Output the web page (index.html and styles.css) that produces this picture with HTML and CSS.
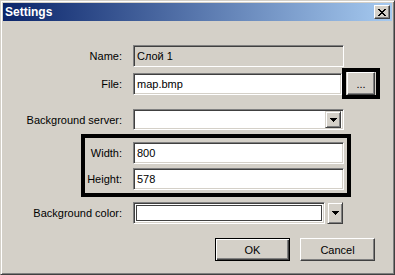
FILE: index.html
```html
<!doctype html>
<html lang="en">
<head>
    <meta charset="UTF-8">
    <title>Settings</title>
    <link rel="stylesheet" href="styles.css">
</head>
<body>
<div class="window">
    <div class="titlebar">
        <span class="title">Settings</span>
        <div class="close">
            <svg width="8" height="7" viewBox="0 0 8 7" shape-rendering="crispEdges"><path d="M0 0h2v1H0zM6 0h2v1H6zM1 1h2v1H1zM5 1h2v1H5zM2 2h4v1H2zM3 3h2v1H3zM2 4h4v1H2zM1 5h2v1H1zM5 5h2v1H5zM0 6h2v1H0zM6 6h2v1H6z" fill="#000"/></svg>
        </div>
    </div>
    <div class="content">
        <div class="row row-name">
            <label class="label">Name:</label>
            <div class="field field-disabled">Слой 1</div>
        </div>
        <div class="row row-file">
            <label class="label">File:</label>
            <div class="field field-file">map.bmp</div>
            <div class="mark mark-browse">
                <div class="btn btn-browse">...</div>
            </div>
        </div>
        <div class="row row-server">
            <label class="label">Background server:</label>
            <div class="field combo">
                <div class="drop drop-inner">
                    <svg width="7" height="4" viewBox="0 0 7 4" shape-rendering="crispEdges"><path d="M0 0h7v1H0zM1 1h5v1H1zM2 2h3v1H2zM3 3h1v1H3z" fill="#000"/></svg>
                </div>
            </div>
        </div>
        <div class="mark mark-size">
            <div class="row">
                <label class="label label-short">Width:</label>
                <div class="field">800</div>
            </div>
            <div class="row row-height">
                <label class="label label-short">Height:</label>
                <div class="field">578</div>
            </div>
        </div>
        <div class="row row-color">
            <label class="label">Background color:</label>
            <div class="swatch-frame"><div class="swatch"></div></div>
            <div class="drop drop-color">
                <svg width="7" height="4" viewBox="0 0 7 4" shape-rendering="crispEdges"><path d="M0 0h7v1H0zM1 1h5v1H1zM2 2h3v1H2zM3 3h1v1H3z" fill="#000"/></svg>
            </div>
        </div>
        <div class="buttons">
            <div class="btn btn-default">OK</div>
            <div class="btn">Cancel</div>
        </div>
    </div>
</div>
</body>
</html>
```

FILE: styles.css
```css
* {
    box-sizing: border-box;
}
body {
    margin: 0;
    font-family: "Liberation Sans", Arial, sans-serif;
    font-size: 11px;
    color: #000;
    background: #d4d0c8;
}
.window {
    width: 395px;
    height: 275px;
    padding: 2px;
    background: #d4d0c8;
    border: 1px solid;
    border-color: #d4d0c8 #404040 #404040 #d4d0c8;
    box-shadow: inset 1px 1px 0 #fff, inset -1px -1px 0 #808080;
}
.titlebar {
    height: 18px;
    display: flex;
    align-items: center;
    justify-content: space-between;
    padding: 0 2px;
    background: linear-gradient(to right, #0a246a, #a6caf0);
}
.title {
    color: #fff;
    font-weight: bold;
    font-size: 12px;
}
.close {
    width: 16px;
    height: 14px;
    display: flex;
    align-items: center;
    justify-content: center;
    background: #d4d0c8;
    border: 1px solid;
    border-color: #fff #404040 #404040 #fff;
    box-shadow: inset -1px -1px 0 #808080;
}
.close svg {
    display: block;
}

/* rows */
.row {
    display: flex;
    align-items: center;
}
.label {
    width: 119px;
    margin-right: 11px;
    text-align: right;
    flex: none;
}
.label-short {
    width: 37px;
}
.field {
    width: 211px;
    height: 22px;
    display: flex;
    align-items: center;
    background: #fff;
    border: 1px solid;
    border-color: #808080 #fff #fff #808080;
    box-shadow: inset 1px 1px 0 #404040, inset -1px -1px 0 #d4d0c8;
    padding-left: 3px;
}
.field-disabled {
    background: #d4d0c8;
}
.row-name {
    margin-top: 24px;
}
.row-file {
    margin-top: 1px;
}
.field-file {
    width: 209px;
}
.row-server {
    margin-top: 10px;
}
.combo {
    height: 21px;
    justify-content: flex-end;
    padding: 2px 2px 2px 0;
}

/* black highlight frames */
.mark {
    border: 4px solid #000;
}
.mark-browse {
    padding: 0 1px;
}
.mark-size {
    width: 270px;
    margin: 4px 0 0 78px;
    padding: 4px 3px 3px 0;
}
.row-height {
    margin-top: 4px;
}

/* buttons */
.btn {
    width: 75px;
    height: 23px;
    display: flex;
    align-items: center;
    justify-content: center;
    background: #d4d0c8;
    border: 1px solid;
    border-color: #fff #404040 #404040 #fff;
    box-shadow: inset -1px -1px 0 #808080;
}
.btn-browse {
    width: 28px;
    padding-top: 1px;
}
.btn-default {
    border-color: #000;
    box-shadow: inset 1px 1px 0 #fff, inset -1px -1px 0 #404040, inset -2px -2px 0 #808080;
}
.drop {
    width: 16px;
    display: flex;
    align-items: center;
    justify-content: center;
    background: #d4d0c8;
    border: 1px solid;
    border-color: #d4d0c8 #404040 #404040 #d4d0c8;
    box-shadow: inset 1px 1px 0 #fff, inset -1px -1px 0 #808080;
}
.drop svg {
    display: block;
}
.drop-inner {
    height: 17px;
}
.drop-color {
    height: 22px;
}
.row-color {
    margin-top: 5px;
}
.swatch-frame {
    width: 192px;
    height: 22px;
    margin-right: 2px;
    padding: 2px;
    background: #fff;
    border: 1px solid;
    border-color: #808080 #fff #fff #808080;
    box-shadow: inset 1px 1px 0 #404040, inset -1px -1px 0 #d4d0c8;
}
.swatch {
    height: 100%;
    border: 1px solid #404040;
    background: #fff;
}
.buttons {
    display: flex;
    justify-content: flex-end;
    gap: 10px;
    margin-top: 14px;
    padding-right: 17px;
}
```
